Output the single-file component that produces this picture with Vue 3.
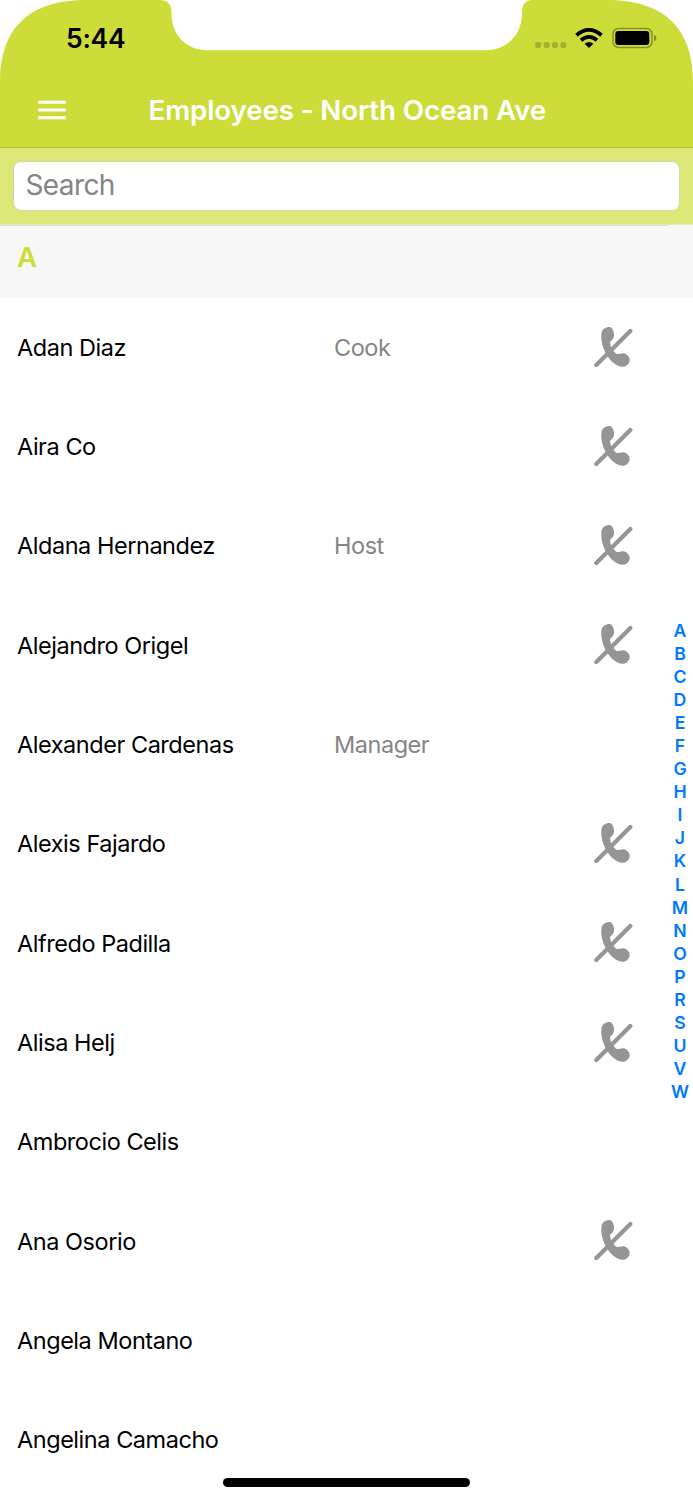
<script setup>
const employees = [
  { name: 'Adan Diaz', role: 'Cook', noPhone: true },
  { name: 'Aira Co', role: '', noPhone: true },
  { name: 'Aldana Hernandez', role: 'Host', noPhone: true },
  { name: 'Alejandro Origel', role: '', noPhone: true },
  { name: 'Alexander Cardenas', role: 'Manager', noPhone: false },
  { name: 'Alexis Fajardo', role: '', noPhone: true },
  { name: 'Alfredo Padilla', role: '', noPhone: true },
  { name: 'Alisa Helj', role: '', noPhone: true },
  { name: 'Ambrocio Celis', role: '', noPhone: false },
  { name: 'Ana Osorio', role: '', noPhone: true },
  { name: 'Angela Montano', role: '', noPhone: false },
  { name: 'Angelina Camacho', role: '', noPhone: false },
]
const letters = 'ABCDEFGHIJKLMNOPRSUVW'.split('')
</script>

<template>
  <div class="phone">
    <header class="top">
      <svg class="bezel" viewBox="0 0 693 100" aria-hidden="true">
        <path d="M0 0H80C28 2 0 29 0 82Z" />
        <path d="M693 0H613C665 2 693 29 693 82Z" />
        <path d="M160 0C168 0 171.500 4 171.500 13C171.500 35 186 50.300 208 50.300H485C507 50.300 522 35 522 13C522 4 525 0 533 0Z" />
      </svg>
      <div class="status">
        <time class="clock">5:44</time>
        <div class="indicators">
          <svg class="signal" viewBox="0 0 32 8" width="32" height="8">
            <rect x="0.200" y="1" width="6" height="6" rx="2" />
            <rect x="8.600" y="1" width="6" height="6" rx="2" />
            <rect x="17" y="1" width="6" height="6" rx="2" />
            <rect x="25.400" y="1" width="6" height="6" rx="2" />
          </svg>
          <svg class="wifi" viewBox="0 0 28 20" width="28" height="20">
            <path d="M1.500 7.200Q7.600 1.900 14 1.900T26.500 7.200" />
            <path d="M6 12.300Q9.800 8.900 14 8.900T22 12.300" />
            <path class="solid" d="M9.600 15.700Q14 12.100 18.400 15.700L14 19.900Z" />
          </svg>
          <svg class="battery" viewBox="0 0 45 22" width="45" height="22">
            <rect class="shell" x="1" y="1.500" width="39" height="19" rx="5.500" />
            <rect x="3.300" y="4" width="34" height="14" rx="3" />
            <path class="tip" d="M42 7.500Q44.500 9 44.500 11T42 14.500Z" />
          </svg>
        </div>
      </div>
      <nav class="bar">
        <svg class="menu" viewBox="0 0 28 20" width="28" height="20">
          <path d="M0 2.300H28M0 10H28M0 17.700H28" />
        </svg>
        <h1>Employees - North Ocean Ave</h1>
      </nav>
    </header>

    <div class="search"><input type="text" placeholder="Search" aria-label="Search" /></div>

    <main>
      <h2><span>A</span></h2>
      <ul class="list">
        <li v-for="e in employees" :key="e.name">
          <span class="name">{{ e.name }}</span>
          <span class="role">{{ e.role }}</span>
          <svg v-if="e.noPhone" class="nophone" viewBox="0 0 40 42" width="40" height="42">
            <path d="M8.500 7C9 3 13 .8 17 1C20 1.700 22 8 20.800 11C20 13 18.500 14.500 17.200 15.500C16.500 20 20.500 26.500 24 28C26.500 28 28.500 26.800 31 27.300C34 28 37 31.500 36.700 34C36.500 38 33 41 29.500 40.800C18 40 6.500 22 8.500 7Z" />
            <path class="slash" d="M3.300 38.900L37.300 5" />
          </svg>
        </li>
      </ul>
      <nav class="index"><span v-for="l in letters" :key="l">{{ l }}</span></nav>
    </main>
    <div class="home"></div>
  </div>
</template>

<style>
body { margin: 0; background: #fff; }
</style>

<style scoped>
* { box-sizing: border-box; }
.phone {
  position: relative;
  width: 693px;
  height: 1500px;
  overflow: hidden;
  background: #fff;
  font-family: Inter, "Liberation Sans", sans-serif;
  color: #000;
}
.top {
  position: relative;
  height: 148px;
  background: #cddc39;
  border-bottom: 1px solid #afbb37;
}
.bezel { position: absolute; top: 0; left: 0; width: 693px; height: 100px; fill: #fff; }
.status {
  position: relative;
  display: flex;
  justify-content: space-between;
  align-items: center;
  height: 76px;
  padding: 0 36px 0 66px;
}
.clock { font-size: 26.500px; font-weight: 600; letter-spacing: -0.250px; }
.indicators { display: flex; align-items: center; }
.signal { margin: 13px 8px 0 0; fill: #a4b02e; }
.wifi { margin-right: 9px; fill: none; stroke: #000; stroke-width: 3.900; }
.wifi .solid { fill: #000; stroke: none; }
.battery .shell { fill: none; stroke: #87912b; stroke-width: 1.500; }
.battery .tip { fill: #87912b; }
.bar { position: relative; display: flex; align-items: center; height: 68px; padding-left: 38px; }
.menu { stroke: #fff; stroke-width: 3; }
h1 {
  margin: 0 0 0 82.500px;
  color: #fff;
  font-size: 27.700px;
  font-weight: 600;
  letter-spacing: -0.110px;
  white-space: nowrap;
}
.search { height: 77px; padding: 13px 13px 0; background: #dde777; border-bottom: 1px solid #e4ebb0; }
input {
  display: block;
  width: 667px;
  height: 50px;
  padding: 0 12px 2px 11.500px;
  border: 1px solid #d2d8a2;
  border-radius: 8px;
  outline: 0;
  background: #fff;
  font: 400 28px Inter, sans-serif;
  letter-spacing: -0.600px;
}
input::placeholder { color: #858585; opacity: 1; }
main { position: relative; }
h2 {
  display: flex;
  align-items: center;
  height: 73px;
  margin: 0;
  padding: 0 0 10px 17px;
  background: linear-gradient(#dcdcdc, #dcdcdc) 0 0 / 668px 1px no-repeat #f7f7f7;
  color: #cddc39;
  font-size: 27.500px;
  font-weight: 600;
}
.list { margin: 0; padding: 0; list-style: none; }
li {
  display: grid;
  grid-template-columns: 317px 259px 40px;
  align-items: center;
  height: 99.300px;
  padding: 0 0 0.600px 17px;
  font-size: 23.500px;
  letter-spacing: -0.460px;
}
.name, .role { white-space: nowrap; }
.role { color: #858585; }
.nophone { margin-top: -1.500px; fill: #959595; }
.slash { fill: none; stroke: #959595; stroke-width: 4.200; stroke-linecap: round; }
.index {
  position: absolute;
  top: 394px;
  right: 0;
  width: 26px;
  display: grid;
  grid-auto-rows: 23.050px;
  align-items: center;
  justify-items: center;
  color: #007aff;
  font-size: 17.700px;
  font-weight: 600;
}
.home {
  position: absolute;
  left: 222.500px;
  top: 1478px;
  width: 247.500px;
  height: 8.500px;
  border-radius: 5px;
  background: #000;
}
</style>
